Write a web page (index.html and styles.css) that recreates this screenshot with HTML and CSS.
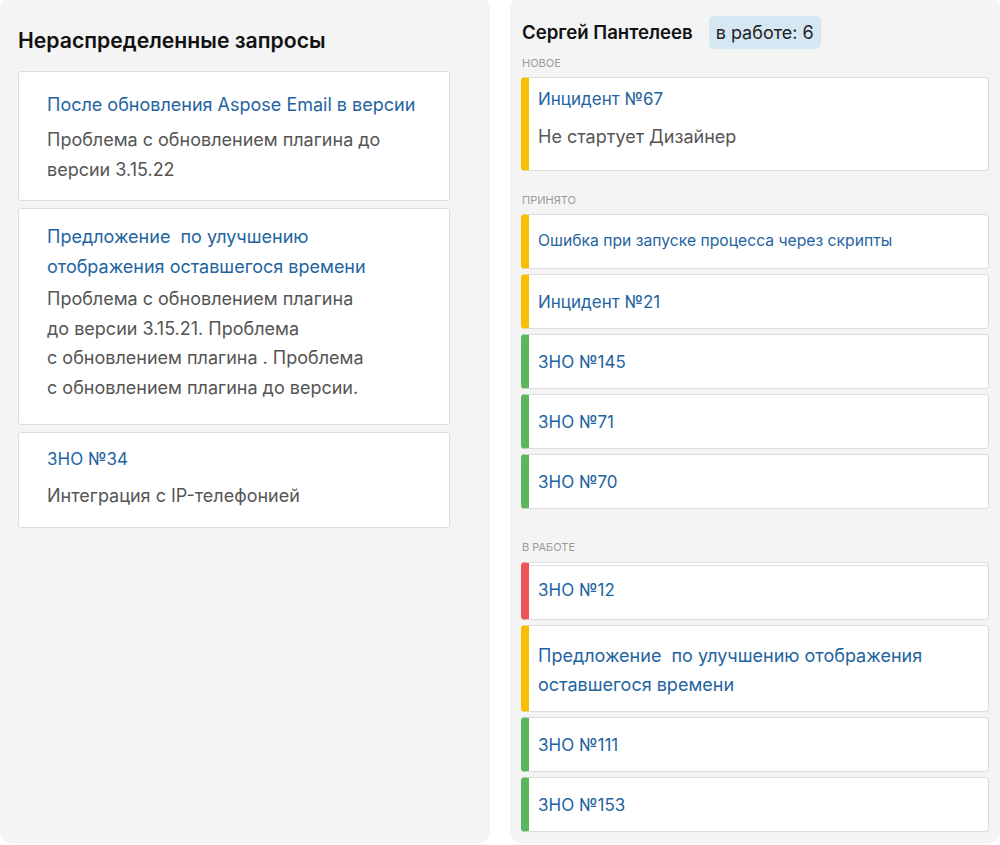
FILE: index.html
```html
<!DOCTYPE html>
<html lang="ru">
<head>
<meta charset="utf-8">
<title>Запросы</title>
<link rel="stylesheet" href="styles.css">
</head>
<body>
<div class="board">
  <section class="panel panel--pool">
    <h2 class="pool-title">Нераспределенные запросы</h2>
    <div class="pool-list">
      <article class="ticket ticket--a">
        <div class="ticket-title">После обновления Aspose Email в версии</div>
        <div class="ticket-text">Проблема с обновлением плагина до<br>версии 3.15.22</div>
      </article>
      <article class="ticket ticket--b">
        <div class="ticket-title">Предложение&nbsp; по улучшению<br>отображения оставшегося времени</div>
        <div class="ticket-text">Проблема с обновлением плагина<br>до версии 3.15.21. Проблема<br>с обновлением плагина . Проблема<br>с обновлением плагина до версии.</div>
      </article>
      <article class="ticket ticket--c">
        <div class="ticket-title">ЗНО №34</div>
        <div class="ticket-text">Интеграция с IP-телефонией</div>
      </article>
    </div>
  </section>

  <section class="panel panel--agent">
    <header class="agent-head">
      <span class="agent-name">Сергей Пантелеев</span>
      <span class="agent-badge">в работе: 6</span>
    </header>

    <div class="stage stage--new">
      <div class="stage-label">НОВОЕ</div>
      <div class="stage-list">
        <article class="task task--yellow task--detail">
          <div class="task-title">Инцидент №67</div>
          <div class="task-text">Не стартует Дизайнер</div>
        </article>
      </div>
    </div>

    <div class="stage stage--accepted">
      <div class="stage-label">ПРИНЯТО</div>
      <div class="stage-list">
        <article class="task task--yellow task--compact"><div class="task-title task-title--small">Ошибка при запуске процесса через скрипты</div></article>
        <article class="task task--yellow"><div class="task-title">Инцидент №21</div></article>
        <article class="task task--green"><div class="task-title">ЗНО №145</div></article>
        <article class="task task--green"><div class="task-title">ЗНО №71</div></article>
        <article class="task task--green"><div class="task-title">ЗНО №70</div></article>
      </div>
    </div>

    <div class="stage stage--work">
      <div class="stage-label">В РАБОТЕ</div>
      <div class="stage-list">
        <article class="task task--red task--stacked"><div class="task-title">ЗНО №12</div></article>
        <article class="task task--yellow task--wide"><div class="task-title task-title--large">Предложение&nbsp; по улучшению отображения<br>оставшегося времени</div></article>
        <article class="task task--green"><div class="task-title">ЗНО №111</div></article>
        <article class="task task--green"><div class="task-title">ЗНО №153</div></article>
      </div>
    </div>
  </section>
</div>
</body>
</html>
```

FILE: styles.css
```css
* { box-sizing: border-box; }

body {
  margin: 0;
  background: #ffffff;
  font-family: Inter, "Noto Sans", "Liberation Sans", sans-serif;
}

.board {
  display: flex;
  gap: 20px;
  margin-top: -4px;
}

.panel {
  flex: none;
  width: 490px;
  height: 847px;
  background: #f4f4f4;
  border-radius: 12px;
}

/* ---------- left: pool ---------- */
.panel--pool {
  padding: 32px 0 0 18px;
}

.pool-title {
  margin: 0 0 19px;
  font-size: 21.2px;
  line-height: 24px;
  font-weight: 600;
  color: #111111;
}

.pool-list {
  display: flex;
  flex-direction: column;
  gap: 7px;
  width: 432px;
}

.ticket {
  background: #ffffff;
  border: 1px solid #dcdcdc;
  border-radius: 3px;
  padding: 0 28px;
}

.ticket-title {
  color: #1f64a0;
  font-size: 18px;
  line-height: 30px;
}

.ticket-text {
  color: #555555;
  font-size: 18px;
  line-height: 29.5px;
}

.ticket--a {
  padding-top: 18px;
  padding-bottom: 16px;
}
.ticket--a .ticket-text { margin-top: 5px; }

.ticket--b {
  padding-top: 13px;
  padding-bottom: 22px;
}
.ticket--b .ticket-text { margin-top: 2px; }

.ticket--c {
  padding-top: 14px;
  padding-bottom: 16px;
}
.ticket--c .ticket-title {
  font-size: 17px;
  line-height: 24px;
}
.ticket--c .ticket-text {
  margin-top: 10px;
  line-height: 30px;
}

/* ---------- right: agent ---------- */
.panel--agent {
  padding: 20px 11px 0 11px;
}

.agent-head {
  display: flex;
  align-items: baseline;
  gap: 16px;
  padding-left: 1px;
}

.agent-name {
  font-size: 18.6px;
  font-weight: 600;
  color: #111111;
}

.agent-badge {
  background: #d6e7f4;
  border-radius: 5px;
  padding: 6px 7px;
  font-size: 18px;
  line-height: 21px;
  color: #222222;
}

.stage-label {
  font-size: 11px;
  line-height: 13px;
  color: #9b9b9b;
  margin: 0 0 7px 1px;
}

.stage--new { margin-top: 8px; }
.stage--accepted { margin-top: 23px; }
.stage--work { margin-top: 32px; }
.stage--work .stage-label { margin-bottom: 8px; }

.stage-list {
  display: flex;
  flex-direction: column;
  gap: 5px;
}

.task {
  background: #ffffff;
  border: 1px solid #dcdcdc;
  border-left: 8px solid #fabe00;
  border-radius: 4px;
  padding: 15px 9px 14px;
}

.task--yellow { border-left-color: #fabe00; }
.task--green { border-left-color: #5cb660; }
.task--red { border-left-color: #ee545a; }

.task-title {
  color: #1f64a0;
  font-size: 17px;
  line-height: 24px;
}

.task-title--small { font-size: 15.7px; }

.task-title--large {
  font-size: 18px;
  line-height: 29.5px;
}

.task-text {
  color: #555555;
  font-size: 18px;
  line-height: 30px;
  margin-top: 10.5px;
}

.task--compact {
  padding-top: 14px;
  padding-bottom: 15px;
}

.task--detail {
  padding-top: 9px;
  padding-bottom: 18px;
}

.task--stacked {
  padding-top: 15px;
  padding-bottom: 17px;
  box-shadow: inset 0 2px 0 #ffffff, inset 0 3px 0 #dcdcdc;
}

.task--wide {
  padding-top: 15px;
  padding-bottom: 11px;
}
```
